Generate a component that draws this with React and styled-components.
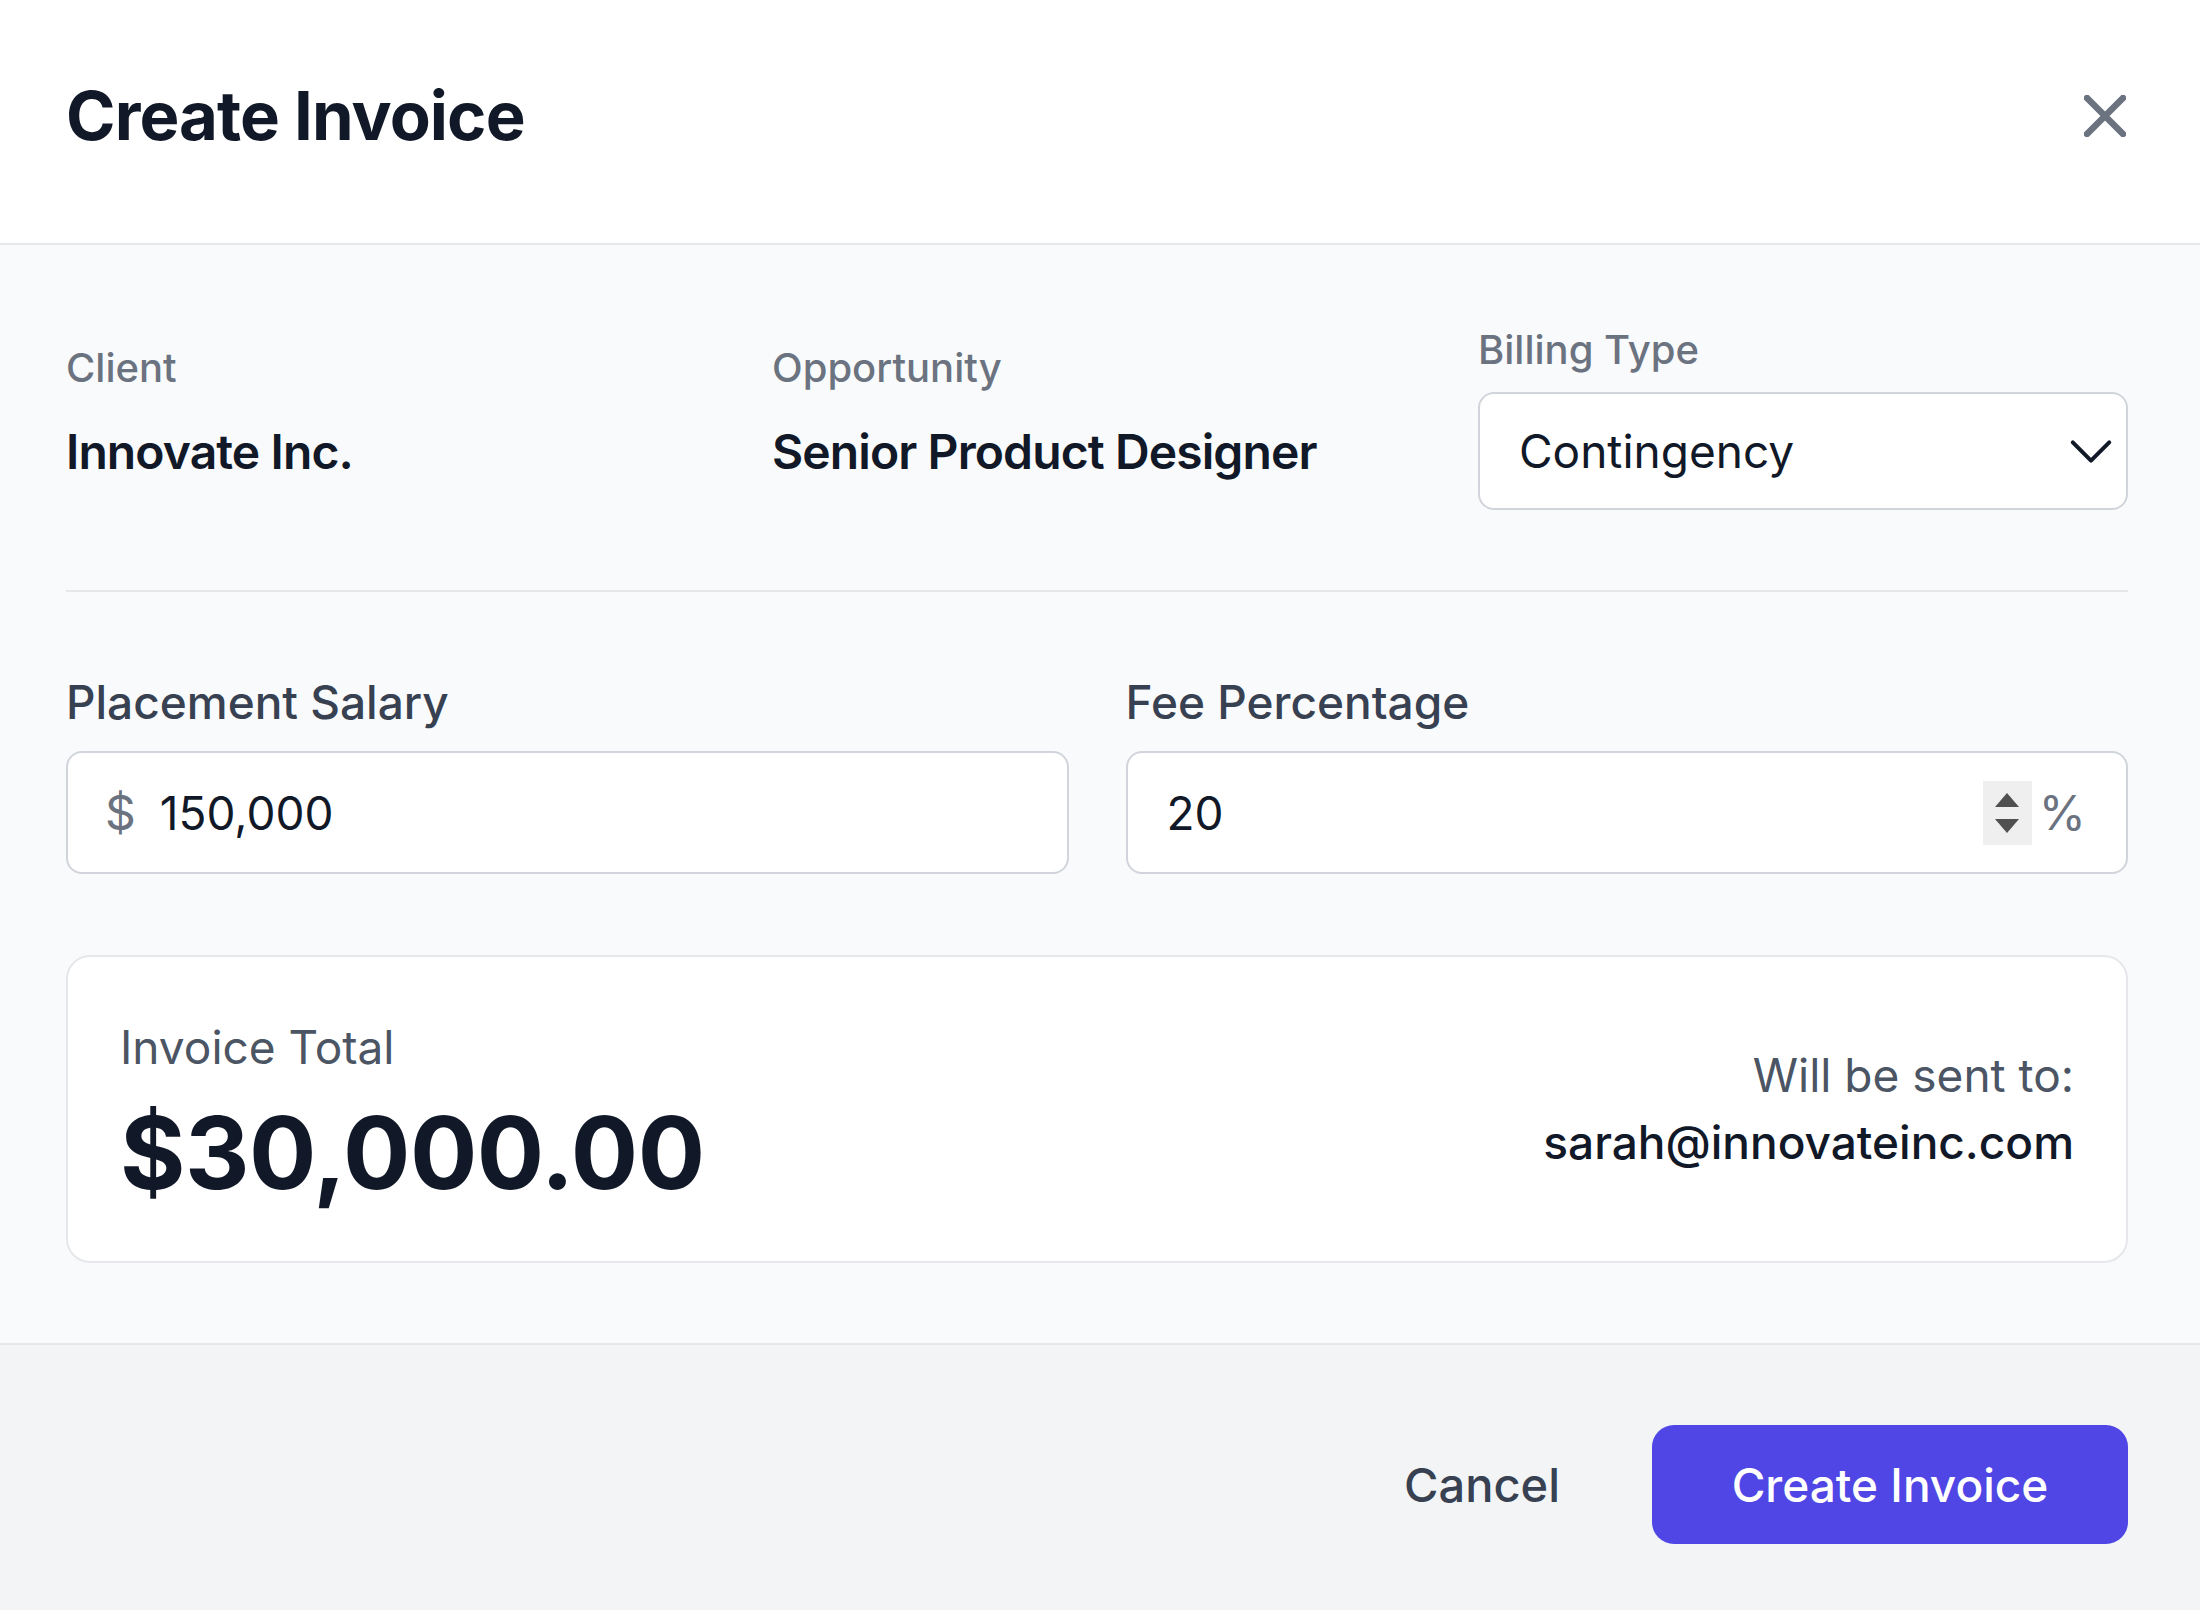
import React from 'react';
import styled, { createGlobalStyle } from 'styled-components';

const GlobalStyle = createGlobalStyle`
  html, body {
    margin: 0;
    padding: 0;
    background: #ffffff;
  }
  body {
    font-family: Inter, "Noto Sans", "Liberation Sans", sans-serif;
    color: #111827;
    -webkit-font-smoothing: antialiased;
  }
  * {
    box-sizing: border-box;
  }
`;

const Modal = styled.div`
  width: 2200px;
  height: 1610px;
  display: flex;
  flex-direction: column;
  background: #ffffff;
  overflow: hidden;
`;

const Header = styled.header`
  height: 245px;
  flex: none;
  display: flex;
  align-items: center;
  justify-content: space-between;
  padding: 0 72px 12px 66px;
  border-bottom: 2px solid #e5e7eb;
  background: #ffffff;
`;

const Title = styled.h2`
  margin: 0;
  font-size: 67px;
  line-height: 1;
  font-weight: 700;
  color: #111827;
  letter-spacing: -0.9px;
`;

const CloseButton = styled.button`
  border: none;
  background: none;
  padding: 0;
  margin-right: 1px;
  width: 44px;
  height: 44px;
  display: flex;
  align-items: center;
  justify-content: center;
  color: #6b7280;
  cursor: pointer;
`;

const Body = styled.section`
  flex: none;
  background: #f9fafb;
  padding: 81px 72px 80px 66px;
`;

const InfoRow = styled.div`
  display: grid;
  grid-template-columns: repeat(3, 1fr);
  column-gap: 56px;
  align-items: end;
`;

const Field = styled.div`
  display: flex;
  flex-direction: column;
  gap: ${({ gap }) => gap || 0}px;
`;

const SmallLabel = styled.div`
  font-size: 40px;
  line-height: 1.2;
  font-weight: 500;
  color: #6b7280;
`;

const Value = styled.div`
  height: 118px;
  display: flex;
  align-items: center;
  font-size: 48px;
  font-weight: 600;
  letter-spacing: -0.9px;
  color: #111827;
`;

const Select = styled.div`
  height: 118px;
  display: flex;
  align-items: center;
  justify-content: space-between;
  padding: 0 12px 0 39px;
  background: #ffffff;
  border: 2px solid #d1d5db;
  border-radius: 16px;
  font-size: 46px;
  color: #111827;
`;

const Divider = styled.hr`
  margin: 80px 0 83px;
  border: none;
  border-top: 2px solid #e5e7eb;
`;

const InputRow = styled.div`
  display: grid;
  grid-template-columns: 1fr 1fr;
  column-gap: 57px;
`;

const FieldLabel = styled.div`
  font-size: 46px;
  line-height: 1.2;
  font-weight: 500;
  color: #374151;
  margin-bottom: 21px;
`;

const InputBox = styled.div`
  height: 123px;
  display: flex;
  align-items: center;
  gap: ${({ gap }) => gap || 0}px;
  padding: 0 ${({ right }) => right || 39}px 0 ${({ left }) => left || 39}px;
  background: #ffffff;
  border: 2px solid #d1d5db;
  border-radius: 16px;
  font-size: 46px;
  color: #111827;
`;

const Affix = styled.span`
  color: #6b7280;
  font-size: 48px;
  font-weight: 400;
`;

const InputValue = styled.span`
  flex: 1;
`;

const Spinner = styled.div`
  width: 49px;
  height: 64px;
  margin-right: 7px;
  background: #efefef;
  display: flex;
  flex-direction: column;
  align-items: center;
  justify-content: center;
  gap: 12px;
`;

const Arrow = styled.span`
  width: 0;
  height: 0;
  border-left: 12px solid transparent;
  border-right: 12px solid transparent;
  ${({ down }) =>
    down ? 'border-top: 14px solid #505050;' : 'border-bottom: 14px solid #505050;'}
`;

const SummaryCard = styled.div`
  margin-top: 81px;
  height: 308px;
  display: flex;
  align-items: center;
  justify-content: space-between;
  padding: 0 52px;
  background: #ffffff;
  border: 2px solid #e5e7eb;
  border-radius: 24px;
`;

const TotalBlock = styled.div`
  display: flex;
  flex-direction: column;
  margin-top: 4px;
`;

const TotalLabel = styled.div`
  font-size: 46px;
  line-height: 1.2;
  color: #4b5563;
`;

const TotalAmount = styled.div`
  margin-top: 28px;
  font-size: 100px;
  line-height: 1;
  font-weight: 700;
  color: #111827;
  letter-spacing: -0.5px;
`;

const Recipient = styled.div`
  display: flex;
  flex-direction: column;
  align-items: flex-end;
  gap: 12px;
`;

const RecipientLabel = styled.div`
  font-size: 46px;
  line-height: 1.2;
  color: #4b5563;
`;

const RecipientEmail = styled.div`
  font-size: 46px;
  line-height: 1.2;
  font-weight: 500;
  color: #111827;
`;

const Footer = styled.footer`
  flex: 1;
  display: flex;
  justify-content: flex-end;
  align-items: flex-start;
  gap: 66px;
  padding: 80px 72px 0 66px;
  background: #f3f4f6;
  border-top: 2px solid #e5e7eb;
`;

const TextButton = styled.button`
  height: 119px;
  padding: 0 26px 0 30px;
  border: none;
  background: none;
  font-family: inherit;
  font-size: 47px;
  font-weight: 500;
  color: #374151;
  cursor: pointer;
`;

const PrimaryButton = styled.button`
  width: 476px;
  height: 119px;
  border: none;
  border-radius: 22px;
  background: #4f46e5;
  font-family: inherit;
  font-size: 46px;
  font-weight: 500;
  color: #ffffff;
  cursor: pointer;
`;

function CloseIcon() {
  return (
    <svg width="42" height="42" viewBox="5 5 14 14" fill="none">
      <path
        d="M6 6l12 12M18 6L6 18"
        stroke="currentColor"
        strokeWidth="2.2"
        strokeLinecap="round"
      />
    </svg>
  );
}

function ChevronDown() {
  return (
    <svg width="46" height="46" viewBox="0 0 24 24" fill="none">
      <path
        d="M2.5 7.5l9.5 9.5 9.5-9.5"
        stroke="#111827"
        strokeWidth="2.1"
        strokeLinecap="round"
        strokeLinejoin="round"
      />
    </svg>
  );
}

export default function App() {
  return (
    <>
      <GlobalStyle />
      <Modal>
        <Header>
          <Title>Create Invoice</Title>
          <CloseButton aria-label="Close">
            <CloseIcon />
          </CloseButton>
        </Header>

        <Body>
          <InfoRow>
            <Field>
              <SmallLabel>Client</SmallLabel>
              <Value>Innovate Inc.</Value>
            </Field>
            <Field>
              <SmallLabel>Opportunity</SmallLabel>
              <Value>Senior Product Designer</Value>
            </Field>
            <Field gap={18}>
              <SmallLabel>Billing Type</SmallLabel>
              <Select>
                <span>Contingency</span>
                <ChevronDown />
              </Select>
            </Field>
          </InfoRow>

          <Divider />

          <InputRow>
            <div>
              <FieldLabel>Placement Salary</FieldLabel>
              <InputBox left={37} gap={24}>
                <Affix>$</Affix>
                <InputValue>150,000</InputValue>
              </InputBox>
            </div>
            <div>
              <FieldLabel>Fee Percentage</FieldLabel>
              <InputBox right={40}>
                <InputValue>20</InputValue>
                <Spinner>
                  <Arrow />
                  <Arrow down />
                </Spinner>
                <Affix>%</Affix>
              </InputBox>
            </div>
          </InputRow>

          <SummaryCard>
            <TotalBlock>
              <TotalLabel>Invoice Total</TotalLabel>
              <TotalAmount>$30,000.00</TotalAmount>
            </TotalBlock>
            <Recipient>
              <RecipientLabel>Will be sent to:</RecipientLabel>
              <RecipientEmail>sarah@innovateinc.com</RecipientEmail>
            </Recipient>
          </SummaryCard>
        </Body>

        <Footer>
          <TextButton>Cancel</TextButton>
          <PrimaryButton>Create Invoice</PrimaryButton>
        </Footer>
      </Modal>
    </>
  );
}
